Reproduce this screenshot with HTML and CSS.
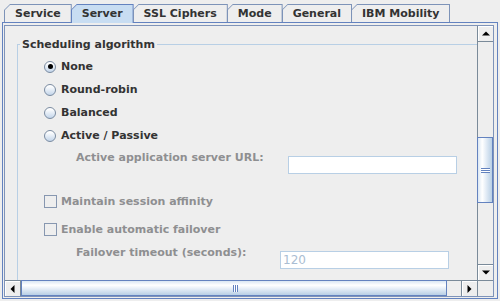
FILE: index.html
```html
<!DOCTYPE html>
<html>
<head>
<meta charset="utf-8">
<link rel="stylesheet" href="styles.css">
</head>
<body>
<div class="tabs">
  <div class="tab"><span>Service</span></div>
  <div class="tab sel"><span>Server</span></div>
  <div class="tab"><span>SSL Ciphers</span></div>
  <div class="tab"><span>Mode</span></div>
  <div class="tab"><span>General</span></div>
  <div class="tab"><span>IBM Mobility</span></div>
</div>
<div class="content">
  <div class="scroll">
    <div class="viewport">
      <fieldset class="group">
        <legend>Scheduling algorithm</legend>
        <div class="opt"><span class="radio on"></span>None</div>
        <div class="opt"><span class="radio"></span>Round-robin</div>
        <div class="opt"><span class="radio"></span>Balanced</div>
        <div class="opt"><span class="radio"></span>Active / Passive</div>
        <div class="frow url"><span class="flabel">Active application server URL:</span><span class="field"></span></div>
        <div class="opt dis first"><span class="check"></span>Maintain session affinity</div>
        <div class="opt dis second"><span class="check"></span>Enable automatic failover</div>
        <div class="frow fo"><span class="flabel">Failover timeout (seconds):</span><span class="field">120</span></div>
      </fieldset>
    </div>
    <div class="vbar">
      <div class="btn vbtn up"><svg width="8" height="5" viewBox="0 0 8 5"><polygon points="0,4.5 8,4.5 4,0.5" fill="#000"/></svg></div>
      <div class="vtrack">
        <div class="vthumb"><span class="grip"></span></div>
      </div>
      <div class="btn vbtn down"><svg width="8" height="5" viewBox="0 0 8 5"><polygon points="0,0.5 8,0.5 4,4.5" fill="#000"/></svg></div>
    </div>
    <div class="hbar">
      <div class="btn hbtn left"><svg width="5" height="8" viewBox="0 0 5 8"><polygon points="4.5,0 4.5,8 0.5,4" fill="#000"/></svg></div>
      <div class="hthumb"><span class="hgrip"></span></div>
      <div class="htrack"></div>
      <div class="btn hbtn right"><svg width="5" height="8" viewBox="0 0 5 8"><polygon points="0.5,0 0.5,8 4.5,4" fill="#000"/></svg></div>
    </div>
    <div class="corner"></div>
  </div>
</div>
</body>
</html>
```
FILE: styles.css
```css
* { box-sizing: border-box; }
html, body { margin: 0; padding: 0; }
body {
  width: 500px;
  height: 301px;
  overflow: hidden;
  background: #eeeeee;
  font-family: "DejaVu Sans", sans-serif;
  font-weight: bold;
  font-size: 11px;
  line-height: 13px;
  color: #333333;
  padding-top: 4px;
}
.tabs {
  display: flex;
  align-items: flex-start;
  height: 18px;
  padding-left: 4px;
  position: relative;
  z-index: 1;
}
.tab {
  height: 18px;
  background: #7d93b8;
  padding: 1px 1px 0 1px;
  clip-path: polygon(0 6px, 6px 0, 100% 0, 100% 100%, 0 100%);
  margin-right: -1px;
}
.tab span {
  display: block;
  height: 100%;
  padding: 1px 10px 0 10px;
  line-height: 16px;
  background: #eeeeee;
  clip-path: polygon(0 5px, 5px 0, 100% 0, 100% 100%, 0 100%);
  white-space: nowrap;
}
.tab.sel {
  height: 19px;
  background: #6382bf;
  padding-bottom: 0;
}
.tab.sel span {
  background: #c8ddf2;
}
.content {
  margin-left: 2px;
  width: 496px;
  height: 277px;
  border: 1px solid #6382bf;
  padding: 2px 3px 1px 1px;
  display: flex;
}
.scroll {
  flex: 1;
  border: 1px solid #7e93b9;
  display: grid;
  grid-template-columns: 1fr 16px;
  grid-template-rows: 1fr 16px;
  min-width: 0;
}
.viewport {
  overflow: hidden;
  min-width: 0;
  padding-top: 12px;
}
.group {
  margin: 0 0 0 12px;
  padding: 4px 0 0 0;
  border: none;
  border-top: 1px solid #b8cfe5;
  border-left: 1px solid #b8cfe5;
  width: 600px;
  height: 400px;
  min-width: 0;
}
.group legend {
  padding: 0 2px;
  margin-left: 2px;
  line-height: 13px;
}
.opt {
  display: flex;
  align-items: center;
  height: 23px;
  margin-left: 26px;
  gap: 5px;
  white-space: nowrap;
}
.radio {
  width: 12px;
  height: 12px;
  border-radius: 50%;
  border: 1px solid #7a8ba1;
  background: linear-gradient(#ffffff 10%, #c3d5ea 100%);
  display: flex;
  align-items: center;
  justify-content: center;
  flex: none;
}
.radio.on::after {
  content: "";
  width: 5px;
  height: 5px;
  border-radius: 50%;
  background: #000;
}
.check {
  width: 13px;
  height: 13px;
  border: 1px solid #8797b0;
  flex: none;
}
.dis { color: #8e8f91; gap: 4px; }
.dis.first { margin-top: 16px; }
.dis.second { margin-top: 5px; }
.frow {
  display: flex;
  align-items: flex-start;
  margin-left: 58px;
  color: #8e8f91;
  white-space: nowrap;
}
.frow.url { height: 27px; }
.frow.url .flabel { width: 212px; margin-top: 4px; }
.frow.url .field { margin-top: 9px; }
.frow.fo .flabel { width: 204px; margin-top: 5px; }
.frow.fo .field { margin-top: 10px; }
.field {
  width: 169px;
  height: 18px;
  border: 1px solid #b8cfe5;
  background: #ffffff;
  font-weight: normal;
  font-size: 12px;
  line-height: 16px;
  color: #aabdd2;
  padding-left: 2px;
}
.vbar {
  display: flex;
  flex-direction: column;
  min-height: 0;
}
.btn {
  background: #eeeeee;
  display: flex;
  align-items: center;
  justify-content: center;
  flex: none;
}
.vbtn {
  height: 16px;
  border-left: 1px solid #7a8a99;
  box-shadow: inset 1px 1px #ffffff;
}
.vbtn.up { border-bottom: 1px solid #7a8a99; }
.vbtn.down { border-top: 1px solid #7a8a99; }
.vtrack {
  flex: 1;
  border-left: 1px solid #7a8a99;
  padding-top: 95px;
}
.vthumb {
  height: 66px;
  border: 1px solid #6382bf;
  background: linear-gradient(to right, #dbe7f3 0%, #ffffff 30%, #e6eef7 55%, #b8cfe5 100%);
  display: flex;
  align-items: center;
  justify-content: center;
  margin-left: -1px;
}
.grip {
  width: 9px;
  height: 5px;
  background: repeating-linear-gradient(#6382bf 0 1px, #ffffff 1px 2px);
}
.hbar {
  display: flex;
  border-top: 1px solid #7a8a99;
}
.hbtn {
  width: 16px;
  box-shadow: inset 1px 1px #ffffff;
}
.hbtn.left { border-right: 1px solid #7a8a99; }
.hbtn.right { border-left: 1px solid #7a8a99; }
.hthumb {
  width: 426px;
  border: 1px solid #6382bf;
  margin-top: -1px;
  background: linear-gradient(#dbe7f3 0%, #ffffff 30%, #e6eef7 55%, #b8cfe5 100%);
  display: flex;
  align-items: center;
  justify-content: center;
}
.hgrip {
  width: 5px;
  height: 7px;
  margin-left: 2px;
  background: repeating-linear-gradient(to right, #6382bf 0 1px, #ffffff 1px 2px);
}
.htrack { flex: 1; }
.corner {
  background: #eeeeee;
  border-top: 1px solid #7a8a99;
  border-left: 1px solid #7a8a99;
}
```
